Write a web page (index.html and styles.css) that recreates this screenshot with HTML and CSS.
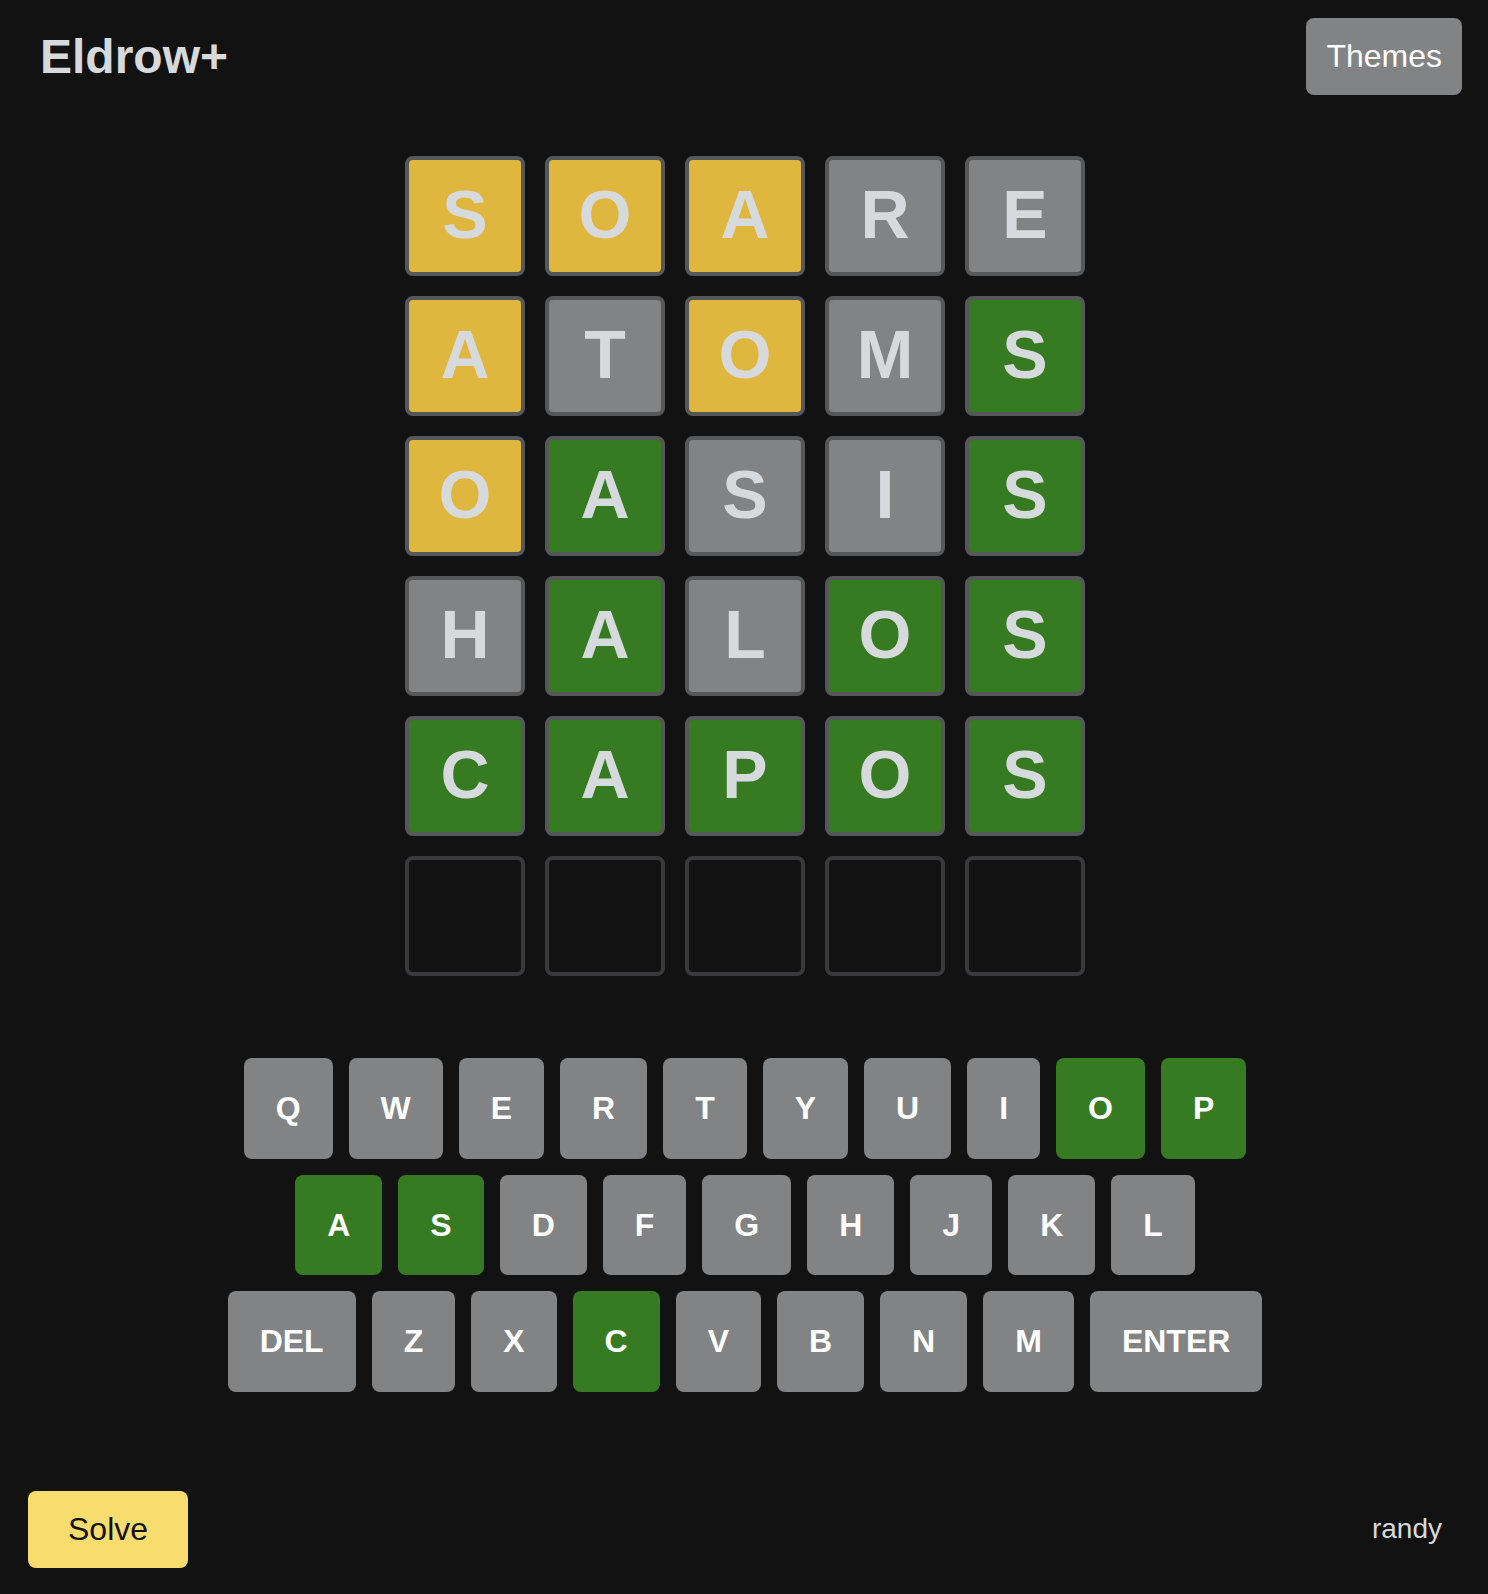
FILE: index.html
```html
<!DOCTYPE html>
<html lang="en">
<head>
<meta charset="utf-8">
<title>Eldrow+</title>
<link rel="stylesheet" href="styles.css">
</head>
<body>
<div class="app">
  <header class="header">
    <h1 class="title">Eldrow+</h1>
    <button class="btn btn-themes">Themes</button>
  </header>

  <main class="board">
    <div class="tile present">S</div><div class="tile present">O</div><div class="tile present">A</div><div class="tile absent">R</div><div class="tile absent">E</div>
    <div class="tile present">A</div><div class="tile absent">T</div><div class="tile present">O</div><div class="tile absent">M</div><div class="tile correct">S</div>
    <div class="tile present">O</div><div class="tile correct">A</div><div class="tile absent">S</div><div class="tile absent">I</div><div class="tile correct">S</div>
    <div class="tile absent">H</div><div class="tile correct">A</div><div class="tile absent">L</div><div class="tile correct">O</div><div class="tile correct">S</div>
    <div class="tile correct">C</div><div class="tile correct">A</div><div class="tile correct">P</div><div class="tile correct">O</div><div class="tile correct">S</div>
    <div class="tile empty"></div><div class="tile empty"></div><div class="tile empty"></div><div class="tile empty"></div><div class="tile empty"></div>
  </main>

  <section class="keyboard">
    <div class="kb-row">
      <button class="key">Q</button><button class="key">W</button><button class="key">E</button><button class="key">R</button><button class="key">T</button><button class="key">Y</button><button class="key">U</button><button class="key">I</button><button class="key key-green">O</button><button class="key key-green">P</button>
    </div>
    <div class="kb-row">
      <button class="key key-green">A</button><button class="key key-green">S</button><button class="key">D</button><button class="key">F</button><button class="key">G</button><button class="key">H</button><button class="key">J</button><button class="key">K</button><button class="key">L</button>
    </div>
    <div class="kb-row">
      <button class="key">DEL</button><button class="key">Z</button><button class="key">X</button><button class="key key-green">C</button><button class="key">V</button><button class="key">B</button><button class="key">N</button><button class="key">M</button><button class="key">ENTER</button>
    </div>
  </section>

  <footer class="footer">
    <button class="btn btn-solve">Solve</button>
    <span class="user">randy</span>
  </footer>
</div>
</body>
</html>
```

FILE: styles.css
```css
html, body {
  margin: 0;
  padding: 0;
  background: #121212;
}

body {
  font-family: "Liberation Sans", Arial, Helvetica, sans-serif;
  color: #d7dadc;
}

.app {
  box-sizing: border-box;
  min-height: 1594px;
  padding: 18px 26px 26px 28px;
  display: flex;
  flex-direction: column;
}

.header {
  display: flex;
  justify-content: space-between;
  align-items: center;
}

.title {
  margin: 0 0 0 12px;
  font-size: 48px;
  font-weight: 700;
  color: #d7dadc;
  line-height: 1.15;
}

.btn {
  font-family: "Liberation Sans", Arial, Helvetica, sans-serif;
  font-size: 32px;
  border: none;
  border-radius: 8px;
  line-height: 1.15;
  cursor: pointer;
}

.btn-themes {
  background: #818384;
  color: #ffffff;
  padding: 20px 20px;
}

.board {
  margin-top: 61px;
  align-self: center;
  display: grid;
  grid-template-columns: repeat(5, 120px);
  grid-auto-rows: 120px;
  gap: 20px;
}

.tile {
  box-sizing: border-box;
  border: 4px solid #565758;
  border-radius: 8px;
  display: flex;
  align-items: center;
  justify-content: center;
  padding-bottom: 3px;
  font-size: 68px;
  font-weight: 700;
  color: #d7dadc;
  line-height: 1;
}

.present { background: #dfb63e; }
.absent { background: #818384; }
.correct { background: #367b22; }
.empty { background: transparent; border-color: #3a3a3c; }

.keyboard {
  margin-top: 82px;
  display: flex;
  flex-direction: column;
  align-items: center;
  gap: 16px;
}

.kb-row {
  display: flex;
  gap: 16px;
}

.key {
  font-family: "Liberation Sans", Arial, Helvetica, sans-serif;
  font-size: 32px;
  font-weight: 700;
  line-height: 1.15;
  padding: 32px;
  border: none;
  border-radius: 8px;
  background: #818384;
  color: #ffffff;
}

.key-green {
  background: #367b22;
}

.footer {
  margin-top: auto;
  display: flex;
  justify-content: space-between;
  align-items: center;
}

.btn-solve {
  background: #f8dc6e;
  color: #121212;
  padding: 20px 40px;
}

.user {
  font-size: 28px;
  color: #d7dadc;
  margin-right: 20px;
  margin-bottom: 2px;
}
```
